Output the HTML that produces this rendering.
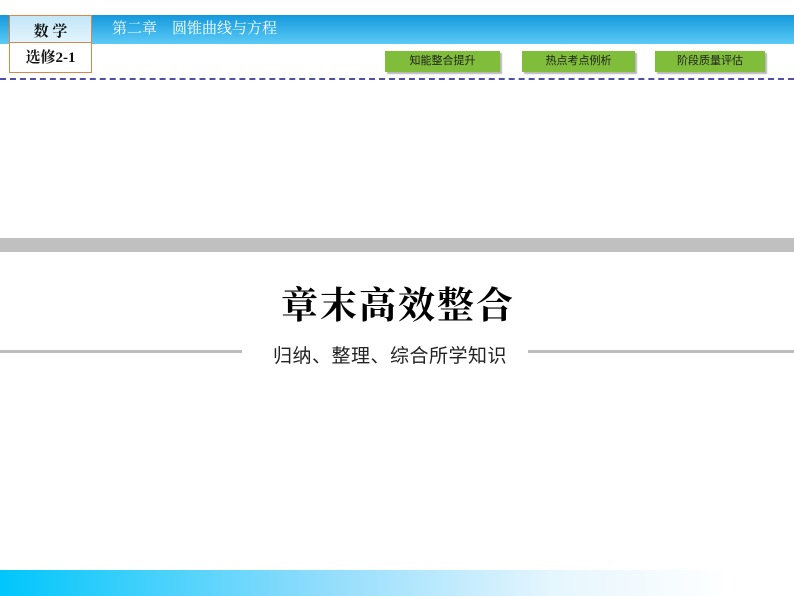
<!DOCTYPE html>
<html><head><meta charset="utf-8"><style>
body{margin:0;width:794px;height:596px;position:relative;background:#fff;overflow:hidden;font-family:"Liberation Serif","Noto Serif CJK SC",serif}
div{position:absolute;box-sizing:border-box}
.btn{top:51px;height:21px;background:#7fbd3a;box-shadow:2px 2px 1px #b8b8b8;font:11px "Liberation Sans","Noto Sans CJK SC",sans-serif;color:#222;text-align:center;line-height:21px}
</style></head><body>
<div style="left:0;top:15px;width:794px;height:29px;background:linear-gradient(#1499dc,#5ccaf6)"></div>
<div style="left:9px;top:15px;width:83px;height:58px;border:1px solid #d9874a;background:#fff"></div>
<div style="left:10px;top:16px;width:81px;height:27px;background:linear-gradient(#c2e6f8,#e2f4fc);border-bottom:1px solid #d9874a;text-align:center;font-weight:bold;font-size:15px;line-height:32px;color:#111">数 学</div>
<div style="left:10px;top:44px;width:81px;height:28px;text-align:center;font-weight:bold;font-size:15px;line-height:28px;color:#111">选修2-1</div>
<div style="left:112px;top:15px;height:29px;line-height:29px;font-size:15px;color:#fff;white-space:pre">第二章　圆锥曲线与方程</div>
<div class="btn" style="left:385px;width:115px">知能整合提升</div>
<div class="btn" style="left:522px;width:113px">热点考点例析</div>
<div class="btn" style="left:655px;width:110px">阶段质量评估</div>
<div style="left:0;top:78px;width:794px;height:0;border-top:2px dashed #5050a8"></div>
<div style="left:0;top:238px;width:794px;height:14px;background:#c0c0c0"></div>
<div style="left:0;top:275px;width:794px;text-align:center;font-size:37px;font-weight:bold;color:#000;letter-spacing:2px;text-indent:2px">章末高效整合</div>
<div style="left:0;top:350px;width:242px;height:3px;background:#bdbdbd"></div>
<div style="left:528px;top:350px;width:266px;height:3px;background:#bdbdbd"></div>
<div style="left:262px;top:341px;width:256px;text-align:center;font:19px 'Liberation Sans','Noto Sans CJK SC',sans-serif;color:#222;letter-spacing:0.5px">归纳、整理、综合所学知识</div>
<div style="left:0;top:570px;width:794px;height:26px;background:linear-gradient(90deg,#00c6fb,#8fdcfc 40%,#e6f6fe 70%,#fff 92%)"></div>
</body></html>
